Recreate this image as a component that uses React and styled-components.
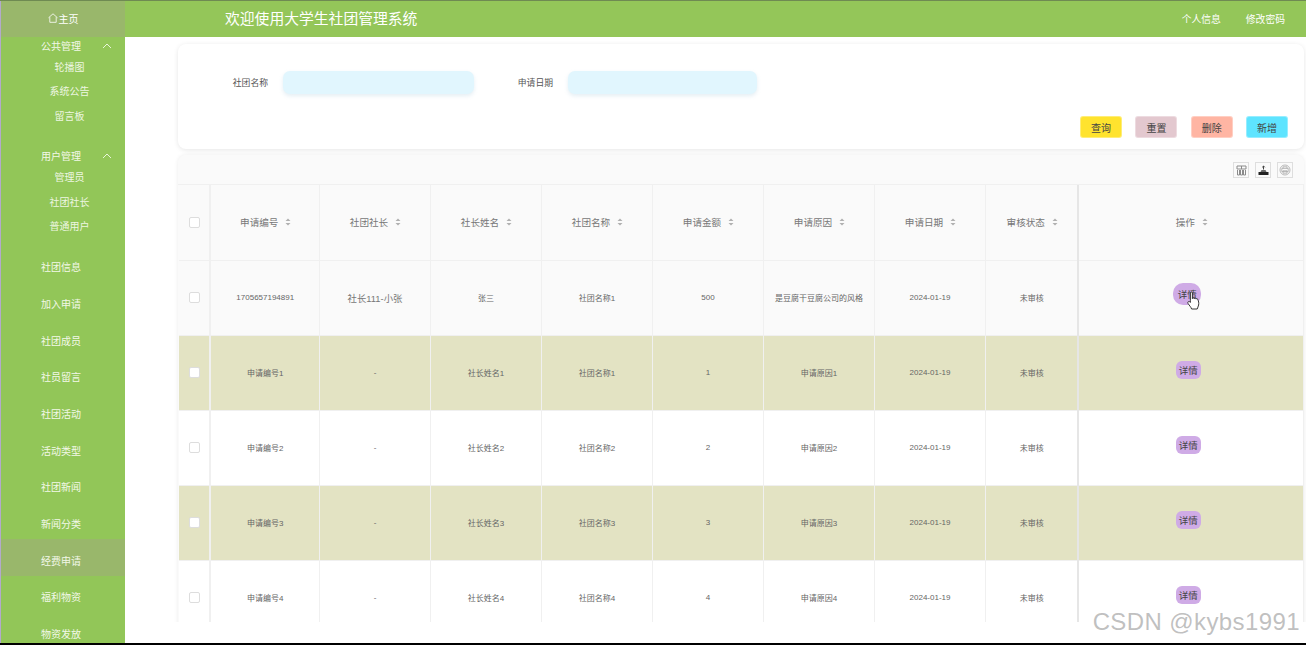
import styled, { createGlobalStyle } from "styled-components"

const GlobalStyle = createGlobalStyle`
  html, body {
    margin: 0;
    padding: 0;
    height: 645px;
    overflow: hidden;
    background: #000;
  }
  * { box-sizing: border-box; }
`

const FONT = `"Liberation Sans", "Noto Sans CJK SC", sans-serif`

const rows = [
  { id: "1705657194891", leader: "社长111-小张", name: "张三", club: "社团名称1", amount: "500", reason: "是豆腐干豆腐公司的风格", plain: true, hover: true },
  { id: "申请编号1", leader: "-", name: "社长姓名1", club: "社团名称1", amount: "1", reason: "申请原因1", striped: true },
  { id: "申请编号2", leader: "-", name: "社长姓名2", club: "社团名称2", amount: "2", reason: "申请原因2" },
  { id: "申请编号3", leader: "-", name: "社长姓名3", club: "社团名称3", amount: "3", reason: "申请原因3", striped: true },
  { id: "申请编号4", leader: "-", name: "社长姓名4", club: "社团名称4", amount: "4", reason: "申请原因4" },
]

const columns = ["申请编号", "社团社长", "社长姓名", "社团名称", "申请金额", "申请原因", "申请日期", "审核状态", "操作"]

function Chevron() {
  return (
    <svg width="10" height="6" viewBox="0 0 10 6" fill="none" stroke="#e8f5d8" strokeWidth="1">
      <path d="M1 5 L5 1 L9 5" />
    </svg>
  )
}

function HomeIcon() {
  return (
    <svg width="10" height="10" viewBox="0 0 10 10" fill="none" stroke="#fff" strokeWidth="0.8">
      <path d="M0.5 4.8 L5 0.8 L9.5 4.8 M1.8 4.2 V9.3 H8.2 V4.2" />
    </svg>
  )
}

function SortIcon() {
  return (
    <svg width="6" height="8" viewBox="0 0 6 8" fill="#b0b0b0">
      <path d="M3 0.5 L5.5 3 H0.5 Z M3 7.5 L0.5 5 H5.5 Z" />
    </svg>
  )
}

function CursorIcon() {
  return (
    <svg width="13" height="19" viewBox="0 0 13 19" fill="#fff" stroke="#222" strokeWidth="0.9">
      <path d="M3.4 9.6 V2 C3.4 0.6 5.4 0.6 5.4 2 V7.6 C5.4 6.6 7.2 6.6 7.2 7.8 C7.2 6.9 9 6.9 9 8.1 C9 7.3 10.8 7.4 10.8 8.6 C11.6 10 12 12 11.6 14 C11.3 15.6 10.6 16.6 10.2 18 H4.6 C4 16 2.4 14.6 1 12.4 C0.2 11 1.8 9.6 3.4 11.4 Z" />
    </svg>
  )
}

function FilterIcon() {
  return (
    <svg width="11" height="11" viewBox="0 0 11 11" fill="none" stroke="#8a8a8a" strokeWidth="1">
      <path d="M1 1 H10 V4 H1 Z M1.5 5 V10 H3.5 V5 M4.5 5 V10 H6.5 V5 M7.5 5 V10 H9.5 V5 M5.5 1 V4" />
    </svg>
  )
}

function ExportIcon() {
  return (
    <svg width="11" height="11" viewBox="0 0 11 11">
      <path d="M0.5 7 H10.5 V10 H0.5 Z" fill="#222" />
      <path d="M2.5 7 L3.5 5 H7.5 L8.5 7 Z" fill="#666" />
      <path d="M5.5 1 V4.5 M4.2 2.3 L5.5 1 L6.8 2.3" fill="none" stroke="#444" />
    </svg>
  )
}

function PrintIcon() {
  return (
    <svg width="12" height="12" viewBox="0 0 12 12" fill="none" stroke="#aaa" strokeWidth="0.8">
      <circle cx="6" cy="6" r="5" />
      <path d="M4 4.4 V2.8 H8 V4.4 M2.8 4.4 H9.2 V7.6 H2.8 Z M4 6.8 H8 V9.2 H4 Z" />
    </svg>
  )
}

export default function App() {
  return (
    <>
      <GlobalStyle />
      <Page>
        <Sidebar>
          <HomeItem><HomeIcon />主页</HomeItem>
          <MenuGroup>
            <GroupTitle>公共管理<Chevron /></GroupTitle>
            <SubItem>轮播图</SubItem>
            <SubItem>系统公告</SubItem>
            <SubItem>留言板</SubItem>
          </MenuGroup>
          <MenuGroup>
            <GroupTitle>用户管理<Chevron /></GroupTitle>
            <SubItem>管理员</SubItem>
            <SubItem>社团社长</SubItem>
            <SubItem>普通用户</SubItem>
          </MenuGroup>
          <MenuList>
            <MenuItem>社团信息</MenuItem>
            <MenuItem>加入申请</MenuItem>
            <MenuItem>社团成员</MenuItem>
            <MenuItem>社员留言</MenuItem>
            <MenuItem>社团活动</MenuItem>
            <MenuItem>活动类型</MenuItem>
            <MenuItem>社团新闻</MenuItem>
            <MenuItem>新闻分类</MenuItem>
            <MenuItem $active>经费申请</MenuItem>
            <MenuItem>福利物资</MenuItem>
            <MenuItem>物资发放</MenuItem>
          </MenuList>
        </Sidebar>
        <Main>
          <TopBar>
            <SiteTitle>欢迎使用大学生社团管理系统</SiteTitle>
            <TopLinks>
              <TopLink>个人信息</TopLink>
              <TopLink>修改密码</TopLink>
            </TopLinks>
          </TopBar>
          <Content>
            <SearchCard>
              <SearchRow>
                <FieldLabel $width={90}>社团名称</FieldLabel>
                <FieldInput $width={191} />
                <FieldLabel $width={79}>申请日期</FieldLabel>
                <FieldInput $width={189} />
              </SearchRow>
              <ButtonRow>
                <ActionButton $bg="#ffe32e">查询</ActionButton>
                <ActionButton $bg="#e3c8cf">重置</ActionButton>
                <ActionButton $bg="#ffb5a3">删除</ActionButton>
                <ActionButton $bg="#5ee4ff">新增</ActionButton>
              </ButtonRow>
            </SearchCard>
            <TableCard>
              <Toolbar>
                <ToolButton><FilterIcon /></ToolButton>
                <ToolButton><ExportIcon /></ToolButton>
                <ToolButton><PrintIcon /></ToolButton>
              </Toolbar>
              <Table>
                <colgroup>
                  <col width="31" />
                  <col width="109" />
                  <col width="111" />
                  <col width="111" />
                  <col width="111" />
                  <col width="111" />
                  <col width="111" />
                  <col width="111" />
                  <col width="93" />
                  <col width="225" />
                </colgroup>
                <thead>
                  <tr>
                    <HeadCell $check><Checkbox /></HeadCell>
                    {columns.map((c) => (
                      <HeadCell key={c} $fixed={c === "操作"}>
                        <HeadLabel>{c}<SortIcon /></HeadLabel>
                      </HeadCell>
                    ))}
                  </tr>
                </thead>
                <tbody>
                  {rows.map((r) => (
                    <BodyRow key={r.id} $striped={r.striped} $plain={r.plain}>
                      <BodyCell $check><Checkbox /></BodyCell>
                      <BodyCell>{r.id}</BodyCell>
                      <BodyCell $wide={r.plain}>{r.leader}</BodyCell>
                      <BodyCell>{r.name}</BodyCell>
                      <BodyCell>{r.club}</BodyCell>
                      <BodyCell>{r.amount}</BodyCell>
                      <BodyCell>{r.reason}</BodyCell>
                      <BodyCell>2024-01-19</BodyCell>
                      <BodyCell>未审核</BodyCell>
                      <BodyCell $fixed>
                        <DetailButton $hover={r.hover}>
                          详情
                          {r.hover && <CursorWrap><CursorIcon /></CursorWrap>}
                        </DetailButton>
                      </BodyCell>
                    </BodyRow>
                  ))}
                </tbody>
              </Table>
            </TableCard>
          </Content>
          <BottomStrip />
        </Main>
        <Watermark>CSDN @kybs1991</Watermark>
      </Page>
    </>
  )
}

const Page = styled.div`
  position: relative;
  display: flex;
  width: 1306px;
  height: 643px;
  overflow: hidden;
  font-family: ${FONT};
  background: #fff;
  border-top: 1px solid #6f8a52;
`

const Sidebar = styled.aside`
  flex: 0 0 125px;
  height: 100%;
  overflow: hidden;
  background: #92c658;
  border-left: 1px solid #b3aacb;
`

const HomeItem = styled.div`
  display: flex;
  align-items: center;
  justify-content: center;
  gap: 1px;
  height: 36px;
  padding-bottom: 2px;
  font-size: 10px;
  color: #fff;
  background: #99b76b;
`

const MenuGroup = styled.div`
  padding-bottom: 18px;

  & + & {
    padding-bottom: 6px;
  }
`

const GroupTitle = styled.div`
  display: flex;
  align-items: center;
  justify-content: space-between;
  height: 19px;
  padding: 0 13px 2px 40px;
  font-size: 10px;
  color: #f2f8e8;
`

const SubItem = styled.div`
  height: 24.4px;
  line-height: 24.4px;
  padding-left: 13px;
  text-align: center;
  font-size: 10px;
  color: #eef6e2;
`

const MenuList = styled.div`
  display: flex;
  flex-direction: column;
`

const MenuItem = styled.div`
  flex: 0 0 36.7px;
  display: flex;
  align-items: center;
  padding: 6px 0 0 40px;
  font-size: 10px;
  color: #f2f8e8;
  background: ${(p) => (p.$active ? "#99b76b" : "transparent")};
`

const Main = styled.main`
  flex: 1;
  min-width: 0;
  display: flex;
  flex-direction: column;
  height: 100%;
`

const TopBar = styled.header`
  flex: 0 0 36px;
  display: flex;
  align-items: center;
  justify-content: space-between;
  padding: 0 21px 0 100px;
  background: #94c659;
  color: #fff;
`

const SiteTitle = styled.div`
  padding-bottom: 3px;
  font-size: 14.8px;
`

const TopLinks = styled.nav`
  display: flex;
  gap: 25px;
`

const TopLink = styled.span`
  font-size: 9.8px;
`

const Content = styled.div`
  flex: 1;
  min-height: 0;
  overflow: hidden;
  padding: 7px 2px 0 53px;
  background: #fff;
`

const BottomStrip = styled.div`
  flex: 0 0 21px;
  background: #fff;
`

const SearchCard = styled.section`
  height: 105px;
  padding: 27px 16px 0 0;
  border-radius: 8px;
  background: #fff;
  box-shadow: 0 1px 5px rgba(0, 0, 0, 0.1);
`

const SearchRow = styled.div`
  display: flex;
  align-items: center;
  height: 23px;
`

const FieldLabel = styled.label`
  width: ${(p) => p.$width}px;
  text-align: right;
  font-size: 8.8px;
  color: #555;
`

const FieldInput = styled.div`
  width: ${(p) => p.$width}px;
  height: 23px;
  margin-left: 15px;
  border-radius: 7px;
  background: #e1f6fe;
  box-shadow: 0 2px 4px rgba(120, 170, 200, 0.2);
`

const ButtonRow = styled.div`
  display: flex;
  justify-content: flex-end;
  gap: 13.3px;
  margin-top: 22px;
`

const ActionButton = styled.button`
  width: 42px;
  height: 22px;
  padding: 0;
  border: 1px solid rgba(255, 255, 255, 0.35);
  border-radius: 3px;
  font-family: ${FONT};
  font-size: 10px;
  color: #444;
  background: ${(p) => p.$bg};
`

const TableCard = styled.section`
  margin-top: 6px;
  border-radius: 8px 8px 0 0;
  background: #fafafa;
  box-shadow: 0 0 4px rgba(0, 0, 0, 0.08);
  overflow: hidden;
`

const Toolbar = styled.div`
  display: flex;
  justify-content: flex-end;
  gap: 6px;
  height: 30px;
  padding: 7px 11px 0 0;
  background: #fafafa;
  border-bottom: 1px solid #f0f0f0;
`

const ToolButton = styled.div`
  display: flex;
  align-items: center;
  justify-content: center;
  width: 16px;
  height: 16px;
  background: #fafafa;
  border: 1px solid #dedede;
`

const Table = styled.table`
  width: 1124px;
  table-layout: fixed;
  border-collapse: collapse;
  margin-left: 1px;
`

const HeadCell = styled.th`
  height: 75px;
  padding: 0 0 0 ${(p) => (p.$check ? "0" : "2px")};
  font-weight: normal;
  font-size: 9.6px;
  color: #777;
  text-align: center;
  border-right: ${(p) => (p.$check ? "2px" : "1px")} solid #f0f0f0;
  border-left: ${(p) => (p.$fixed ? "2px solid #e6e6e6" : "none")};
  background: #fafafa;
`

const HeadLabel = styled.span`
  display: inline-flex;
  align-items: center;
  gap: 7px;
`

const BodyRow = styled.tr`
  height: 75px;
  background: ${(p) => (p.$striped ? "#e3e3c3" : p.$plain ? "#fafafa" : "#fff")};
`

const BodyCell = styled.td`
  padding: 0 0 0 ${(p) => (p.$check ? "0" : "1px")};
  height: 75px;
  font-size: ${(p) => (p.$wide ? "9.4px" : "8px")};
  color: ${(p) => (p.$wide ? "#777" : "#666")};
  text-align: center;
  border-top: 1px solid #f0f0f0;
  border-right: ${(p) => (p.$check ? "2px" : "1px")} solid #f0f0f0;
  border-left: ${(p) => (p.$fixed ? "2px solid #e6e6e6" : "none")};
`

const Checkbox = styled.span`
  display: inline-block;
  vertical-align: middle;
  width: 11px;
  height: 11px;
  border-radius: 2px;
  background: #fff;
  border: 1px solid #ddd;
`

const DetailButton = styled.button`
  position: relative;
  left: ${(p) => (p.$hover ? "-4px" : "-3px")};
  top: ${(p) => (p.$hover ? "-4px" : "-3px")};
  width: ${(p) => (p.$hover ? "28px" : "25px")};
  height: ${(p) => (p.$hover ? "22px" : "18px")};
  padding: 0;
  border: none;
  border-radius: ${(p) => (p.$hover ? "10px" : "6px")};
  font-family: ${FONT};
  font-size: 9.5px;
  color: #444;
  background: #cfabe6;
`

const CursorWrap = styled.span`
  position: absolute;
  left: 14px;
  top: 8px;
  display: block;
  line-height: 0;
`

const Watermark = styled.div`
  position: absolute;
  right: 6px;
  bottom: 7px;
  font-size: 24px;
  letter-spacing: 0.4px;
  color: rgba(150, 150, 150, 0.6);
  text-shadow: 0 0 1px #fff;
`
